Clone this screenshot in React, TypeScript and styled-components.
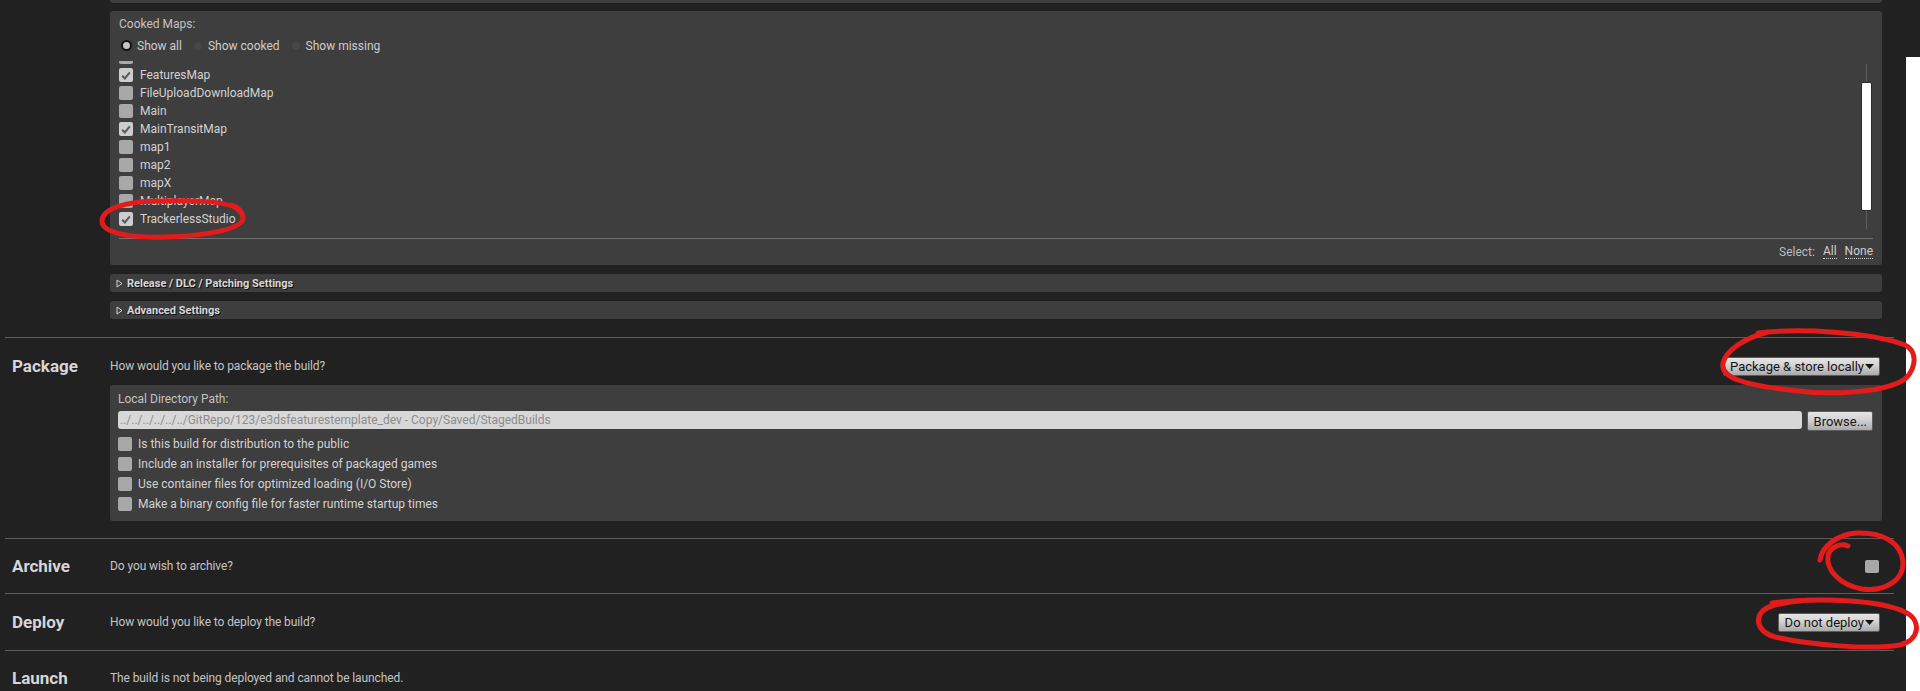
import React from "react";
import styled, { createGlobalStyle } from "styled-components";

const GlobalStyle = createGlobalStyle`
  html, body { margin: 0; padding: 0; background: #ffffff; }
  body { font-family: Roboto, "Noto Sans", "DejaVu Sans", sans-serif; }
  * { box-sizing: border-box; }
`;

const Window = styled.div`
  position: relative;
  width: 1920px;
  height: 691px;
  overflow: hidden;
  display: flex;
  background: #ffffff;
`;

const Main = styled.div`
  width: 1906px;
  height: 100%;
  flex: none;
  background: #212121;
  padding: 0 12px 0 5px;
  display: flex;
  flex-direction: column;
`;

const SideStrip = styled.div`
  flex: 1;
  display: flex;
  flex-direction: column;
`;

const SideStripTop = styled.div`
  height: 57px;
  background: #212121;
`;

const Section = styled.section<{ $padTop: number; $padBottom: number; $last?: boolean }>`
  display: flex;
  flex: none;
  padding: ${(p) => p.$padTop}px 0 ${(p) => p.$padBottom}px;
  border-bottom: ${(p) => (p.$last ? "none" : "1px solid #5c5c5c")};
`;

const SectionLabel = styled.div`
  width: 105px;
  flex: none;
  height: 20px;
  display: flex;
  align-items: center;
  padding-left: 7px;
  font-weight: 700;
  font-size: 17px;
  color: #d6d6d6;
`;

const SectionBody = styled.div`
  flex: 1;
  min-width: 0;
  display: flex;
  flex-direction: column;
  margin-right: 12px;
`;

const HeaderRow = styled.div`
  display: flex;
  align-items: center;
  justify-content: space-between;
  height: 20px;
`;

const Question = styled.span`
  font-size: 12px;
  letter-spacing: -0.1px;
  color: #c4c4c4;
`;

const PanelTail = styled.div`
  height: 3px;
  background: #3e3e3e;
  border-radius: 0 0 3px 3px;
`;

const Panel = styled.div<{ $mt: number }>`
  margin-top: ${(p) => p.$mt}px;
  background: #3e3e3e;
  border-radius: 3px;
  display: flex;
  flex-direction: column;
`;

const CookedPanel = styled(Panel)`
  height: 254px;
  padding: 6px 9px 6px 9px;
`;

const PackagePanel = styled(Panel)`
  padding: 7px 9px 7px 8px;
`;

const SmallLabel = styled.div`
  height: 15px;
  line-height: 15px;
  font-size: 12px;
  color: #c2c2c2;
`;

const RadioRow = styled.div`
  margin-top: 6px;
  height: 15px;
  display: flex;
  align-items: center;
`;

const RadioItem = styled.label`
  display: flex;
  align-items: center;
  font-size: 12px;
  color: #cdcdcd;
  margin-right: 8px;
`;

const RadioDot = styled.span<{ $on?: boolean }>`
  width: ${(p) => (p.$on ? 11 : 8)}px;
  height: ${(p) => (p.$on ? 11 : 8)}px;
  border-radius: 50%;
  margin: 0 ${(p) => (p.$on ? 5 : 6)}px 0 ${(p) => (p.$on ? 2 : 4)}px;
  background: ${(p) => (p.$on ? "#c4c4c4" : "#4b4646")};
  border: ${(p) => (p.$on ? "2px solid #121212" : "none")};
  flex: none;
`;

const ListArea = styled.div`
  margin-top: 8px;
  height: 168px;
  display: flex;
`;

const ListViewport = styled.div`
  flex: 1;
  overflow: hidden;
`;

const ListInner = styled.div<{ $offset: number }>`
  margin-top: ${(p) => -p.$offset}px;
  display: flex;
  flex-direction: column;
`;

const CheckRow = styled.div<{ $h: number; $gap: number }>`
  height: ${(p) => p.$h}px;
  display: flex;
  align-items: center;
  gap: ${(p) => p.$gap}px;
  font-size: 12px;
  color: #d2d2d2;
`;

const Box = styled.span<{ $checked?: boolean }>`
  width: 14px;
  height: 14px;
  flex: none;
  border-radius: 2px;
  background: ${(p) => (p.$checked ? "#cdcdcd" : "#a8a8a8")};
  display: flex;
  align-items: center;
  justify-content: center;
`;

const ArchiveBox = styled(Box)`
  height: 13px;
  margin-right: 3px;
`;

const ScrollTrack = styled.div`
  width: 12px;
  flex: none;
  margin: 3px 0 0 0;
  display: flex;
  flex-direction: column;
  background: linear-gradient(
    to right,
    transparent 5px,
    #5c5c5c 5px,
    #5c5c5c 6px,
    transparent 6px
  );
`;

const ScrollThumb = styled.div`
  margin-top: 18px;
  width: 11px;
  height: 129px;
  background: #ffffff;
  border: 1px solid #2a2a2a;
  border-radius: 2px;
`;

const Divider = styled.div`
  margin-top: 9px;
  height: 1px;
  background: #707070;
`;

const SelectRow = styled.div`
  margin-top: 5px;
  height: 15px;
  display: flex;
  align-items: center;
  justify-content: flex-end;
  gap: 8px;
  font-size: 12px;
  color: #bdbdbd;
`;

const SelectLink = styled.span`
  color: #cfcfcf;
  line-height: 13px;
  border-bottom: 1px dotted #d0d0d0;
`;

const ExpanderBar = styled.div`
  margin-top: 9px;
  height: 18px;
  background: #3e3e3e;
  border-radius: 3px;
  display: flex;
  align-items: center;
  padding-left: 6px;
  gap: 4px;
  font-size: 11px;
  font-weight: 700;
  color: #d8d8d8;
  text-shadow: 1px 1px 0 #111;
`;

const PathRow = styled.div`
  margin-top: 4px;
  height: 20px;
  display: flex;
  align-items: flex-start;
  gap: 5px;
`;

const PathInput = styled.div`
  flex: 1;
  height: 18px;
  background: #d8d8d8;
  border-radius: 3px;
  padding-left: 2px;
  font-size: 12px;
  line-height: 18px;
  color: #8c8c8c;
  white-space: nowrap;
  overflow: hidden;
`;

const GreyButton = styled.button<{ $h: number }>`
  height: ${(p) => p.$h}px;
  display: inline-flex;
  align-items: center;
  gap: 1px;
  padding: 0 5px 0 6px;
  margin: 0;
  font-family: Roboto, "Noto Sans", sans-serif;
  font-size: 13px;
  color: #141414;
  background: linear-gradient(#e6e6e6 0%, #d2d2d2 45%, #a9a9a9 100%);
  border: 1px solid #5c5c5c;
  border-radius: 2px;
  white-space: nowrap;
`;

const DropButton = styled(GreyButton)`
  margin-right: 2px;
`;

const CheckList = styled.div`
  margin-top: 3px;
  display: flex;
  flex-direction: column;
`;

const Annotations = styled.svg`
  position: absolute;
  left: 0;
  top: 0;
  width: 1920px;
  height: 691px;
  pointer-events: none;
`;

const Check = () => (
  <svg width="10" height="9" viewBox="0 0 10 9">
    <path d="M1.2 4.8 L3.8 7.4 L8.8 1.4" stroke="#5a5a5a" strokeWidth="2" fill="none" />
  </svg>
);

const Caret = () => (
  <svg width="9" height="5" viewBox="0 0 9 5">
    <path d="M0 0 H9 L4.5 5 Z" fill="#141414" />
  </svg>
);

const ExpandTri = () => (
  <svg width="7" height="9" viewBox="0 0 7 9">
    <path d="M1 1 L6 4.5 L1 8 Z" stroke="#cfcfcf" strokeWidth="1" fill="none" />
  </svg>
);

const maps: { name: string; checked: boolean }[] = [
  { name: "", checked: false },
  { name: "FeaturesMap", checked: true },
  { name: "FileUploadDownloadMap", checked: false },
  { name: "Main", checked: false },
  { name: "MainTransitMap", checked: true },
  { name: "map1", checked: false },
  { name: "map2", checked: false },
  { name: "mapX", checked: false },
  { name: "MultiplayerMap", checked: false },
  { name: "TrackerlessStudio", checked: true },
];

const packageOptions = [
  "Is this build for distribution to the public",
  "Include an installer for prerequisites of packaged games",
  "Use container files for optimized loading (I/O Store)",
  "Make a binary config file for faster runtime startup times",
];

export default function App() {
  return (
    <>
      <GlobalStyle />
      <Window>
        <Main>
          <Section $padTop={0} $padBottom={18}>
            <SectionLabel />
            <SectionBody>
              <PanelTail />
              <CookedPanel $mt={8}>
                <SmallLabel>Cooked Maps:</SmallLabel>
                <RadioRow>
                  <RadioItem>
                    <RadioDot $on />
                    Show all
                  </RadioItem>
                  <RadioItem>
                    <RadioDot />
                    Show cooked
                  </RadioItem>
                  <RadioItem>
                    <RadioDot />
                    Show missing
                  </RadioItem>
                </RadioRow>
                <ListArea>
                  <ListViewport>
                    <ListInner $offset={13}>
                      {maps.map((m, i) => (
                        <CheckRow key={i} $h={18} $gap={7}>
                          <Box $checked={m.checked}>{m.checked && <Check />}</Box>
                          {m.name}
                        </CheckRow>
                      ))}
                    </ListInner>
                  </ListViewport>
                  <ScrollTrack>
                    <ScrollThumb />
                  </ScrollTrack>
                </ListArea>
                <Divider />
                <SelectRow>
                  Select:
                  <SelectLink>All</SelectLink>
                  <SelectLink>None</SelectLink>
                </SelectRow>
              </CookedPanel>
              <ExpanderBar>
                <ExpandTri />
                Release / DLC / Patching Settings
              </ExpanderBar>
              <ExpanderBar>
                <ExpandTri />
                Advanced Settings
              </ExpanderBar>
            </SectionBody>
          </Section>

          <Section $padTop={18} $padBottom={17}>
            <SectionLabel>Package</SectionLabel>
            <SectionBody>
              <HeaderRow>
                <Question>How would you like to package the build?</Question>
                <DropButton $h={19}>
                  Package &amp; store locally
                  <Caret />
                </DropButton>
              </HeaderRow>
              <PackagePanel $mt={9}>
                <SmallLabel>Local Directory Path:</SmallLabel>
                <PathRow>
                  <PathInput>
                    ../../../../../../GitRepo/123/e3dsfeaturestemplate_dev - Copy/Saved/StagedBuilds
                  </PathInput>
                  <GreyButton $h={20}>Browse...</GreyButton>
                </PathRow>
                <CheckList>
                  {packageOptions.map((o) => (
                    <CheckRow key={o} $h={20} $gap={6}>
                      <Box />
                      {o}
                    </CheckRow>
                  ))}
                </CheckList>
              </PackagePanel>
            </SectionBody>
          </Section>

          <Section $padTop={17} $padBottom={17}>
            <SectionLabel>Archive</SectionLabel>
            <SectionBody>
              <HeaderRow>
                <Question>Do you wish to archive?</Question>
                <ArchiveBox />
              </HeaderRow>
            </SectionBody>
          </Section>

          <Section $padTop={18} $padBottom={18}>
            <SectionLabel>Deploy</SectionLabel>
            <SectionBody>
              <HeaderRow>
                <Question>How would you like to deploy the build?</Question>
                <DropButton $h={19}>
                  Do not deploy
                  <Caret />
                </DropButton>
              </HeaderRow>
            </SectionBody>
          </Section>

          <Section $padTop={17} $padBottom={0} $last>
            <SectionLabel>Launch</SectionLabel>
            <SectionBody>
              <HeaderRow>
                <Question>The build is not being deployed and cannot be launched.</Question>
              </HeaderRow>
            </SectionBody>
          </Section>
        </Main>
        <SideStrip>
          <SideStripTop />
        </SideStrip>

        <Annotations viewBox="0 0 1920 691">
          <g stroke="#e21b1b" strokeWidth="5" fill="none" strokeLinecap="round" strokeLinejoin="round">
            <path d="M 240 212 C 236 202, 200 200, 160 201 C 125 201, 102 209, 102 221 C 102 233, 130 238, 165 237 C 205 236, 245 229, 243 217 C 242 211, 238 207, 232 205" />
            <path d="M 1758 333 C 1800 328, 1870 332, 1905 345 C 1920 352, 1915 375, 1900 382 C 1880 392, 1830 396, 1790 390 C 1745 385, 1720 378, 1723 363 C 1726 350, 1745 338, 1768 332" />
            <path d="M 1848 546 C 1842 543, 1830 546, 1828 556 C 1826 570, 1840 585, 1862 589 C 1885 592, 1904 580, 1903 562 C 1901 542, 1882 532, 1857 533 C 1838 534, 1822 546, 1820 560" />
            <path d="M 1772 603 C 1820 597, 1880 600, 1905 612 C 1922 620, 1920 640, 1900 645 C 1870 650, 1810 645, 1775 637 C 1755 632, 1752 612, 1772 606 C 1790 601, 1800 601, 1810 600" />
          </g>
        </Annotations>
      </Window>
    </>
  );
}
